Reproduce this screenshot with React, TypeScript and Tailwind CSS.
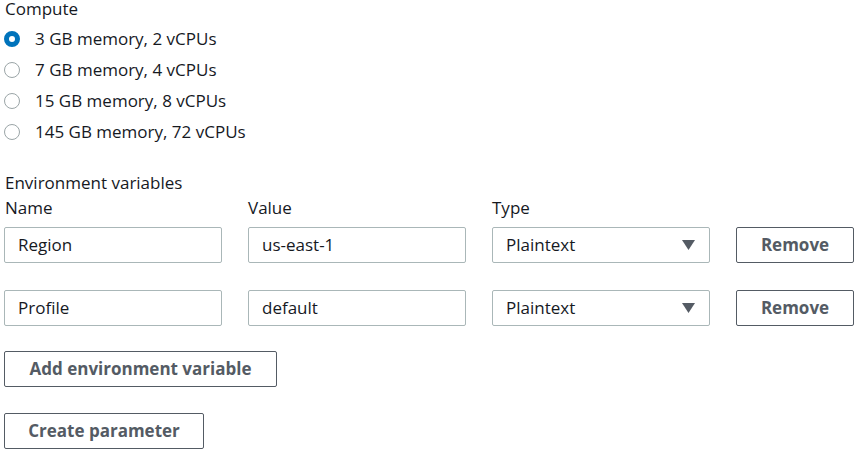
const OPTIONS = [
  "3 GB memory, 2 vCPUs",
  "7 GB memory, 4 vCPUs",
  "15 GB memory, 8 vCPUs",
  "145 GB memory, 72 vCPUs",
];

const VARS = [
  { name: "Region", value: "us-east-1", type: "Plaintext" },
  { name: "Profile", value: "default", type: "Plaintext" },
];

function Radio({ checked }: { checked: boolean }) {
  return checked ? (
    <span className="block w-[16px] h-[16px] rounded-full border-[5px] border-[#0073bb] bg-white" />
  ) : (
    <span className="block w-[16px] h-[16px] rounded-full border-[1.5px] border-[#9ba5a7] bg-white" />
  );
}

function Field({ children }: { children: React.ReactNode }) {
  return (
    <div className="h-[36px] flex items-center pl-[13px] pr-[14px] border border-[#aab7b8] rounded-[2px] bg-white text-[17px] text-[#16191f]">
      {children}
    </div>
  );
}

function Button({ children, className = "" }: { children: React.ReactNode; className?: string }) {
  return (
    <button
      className={`h-[36px] flex items-center justify-center border border-[#545b64] rounded-[2px] bg-white text-[17px] font-bold text-[#545b64] ${className}`}
    >
      {children}
    </button>
  );
}

export default function App() {
  return (
    <div
      className="w-[865px] h-[450px] bg-white text-[#16191f] pl-[4px] overflow-hidden"
      style={{ fontFamily: '"Open Sans", "Noto Sans", sans-serif' }}
    >
      <div className="text-[17px] leading-[18px] pl-[1px]">Compute</div>
      <div className="flex flex-col mt-[10px] gap-[10px]">
        {OPTIONS.map((o, i) => (
          <label key={o} className="flex items-center h-[21px] gap-[15px]">
            <Radio checked={i === 0} />
            <span className="text-[17px]">{o}</span>
          </label>
        ))}
      </div>

      <div className="mt-[30px] text-[17px] leading-[22px] pl-[1px]">Environment variables</div>
      <div className="grid grid-cols-[218px_218px_218px_118px] gap-x-[26px] mt-[3px]">
        <div className="text-[17px] leading-[22px] pl-[1px]">Name</div>
        <div className="text-[17px] leading-[22px]">Value</div>
        <div className="text-[17px] leading-[22px]">Type</div>
        <div />
      </div>
      <div className="flex flex-col gap-[27px] mt-[8px]">
        {VARS.map((v) => (
          <div key={v.name} className="grid grid-cols-[218px_218px_218px_118px] gap-x-[26px]">
            <Field>{v.name}</Field>
            <Field>{v.value}</Field>
            <Field>
              <span className="flex-1">{v.type}</span>
              <svg width="13" height="10" viewBox="0 0 13 10">
                <path d="M0 0 H13 L6.5 10 Z" fill="#545b64" />
              </svg>
            </Field>
            <Button>Remove</Button>
          </div>
        ))}
      </div>

      <Button className="w-[273px] mt-[25px]">Add environment variable</Button>
      <Button className="w-[200px] mt-[26px]">Create parameter</Button>
    </div>
  );
}
